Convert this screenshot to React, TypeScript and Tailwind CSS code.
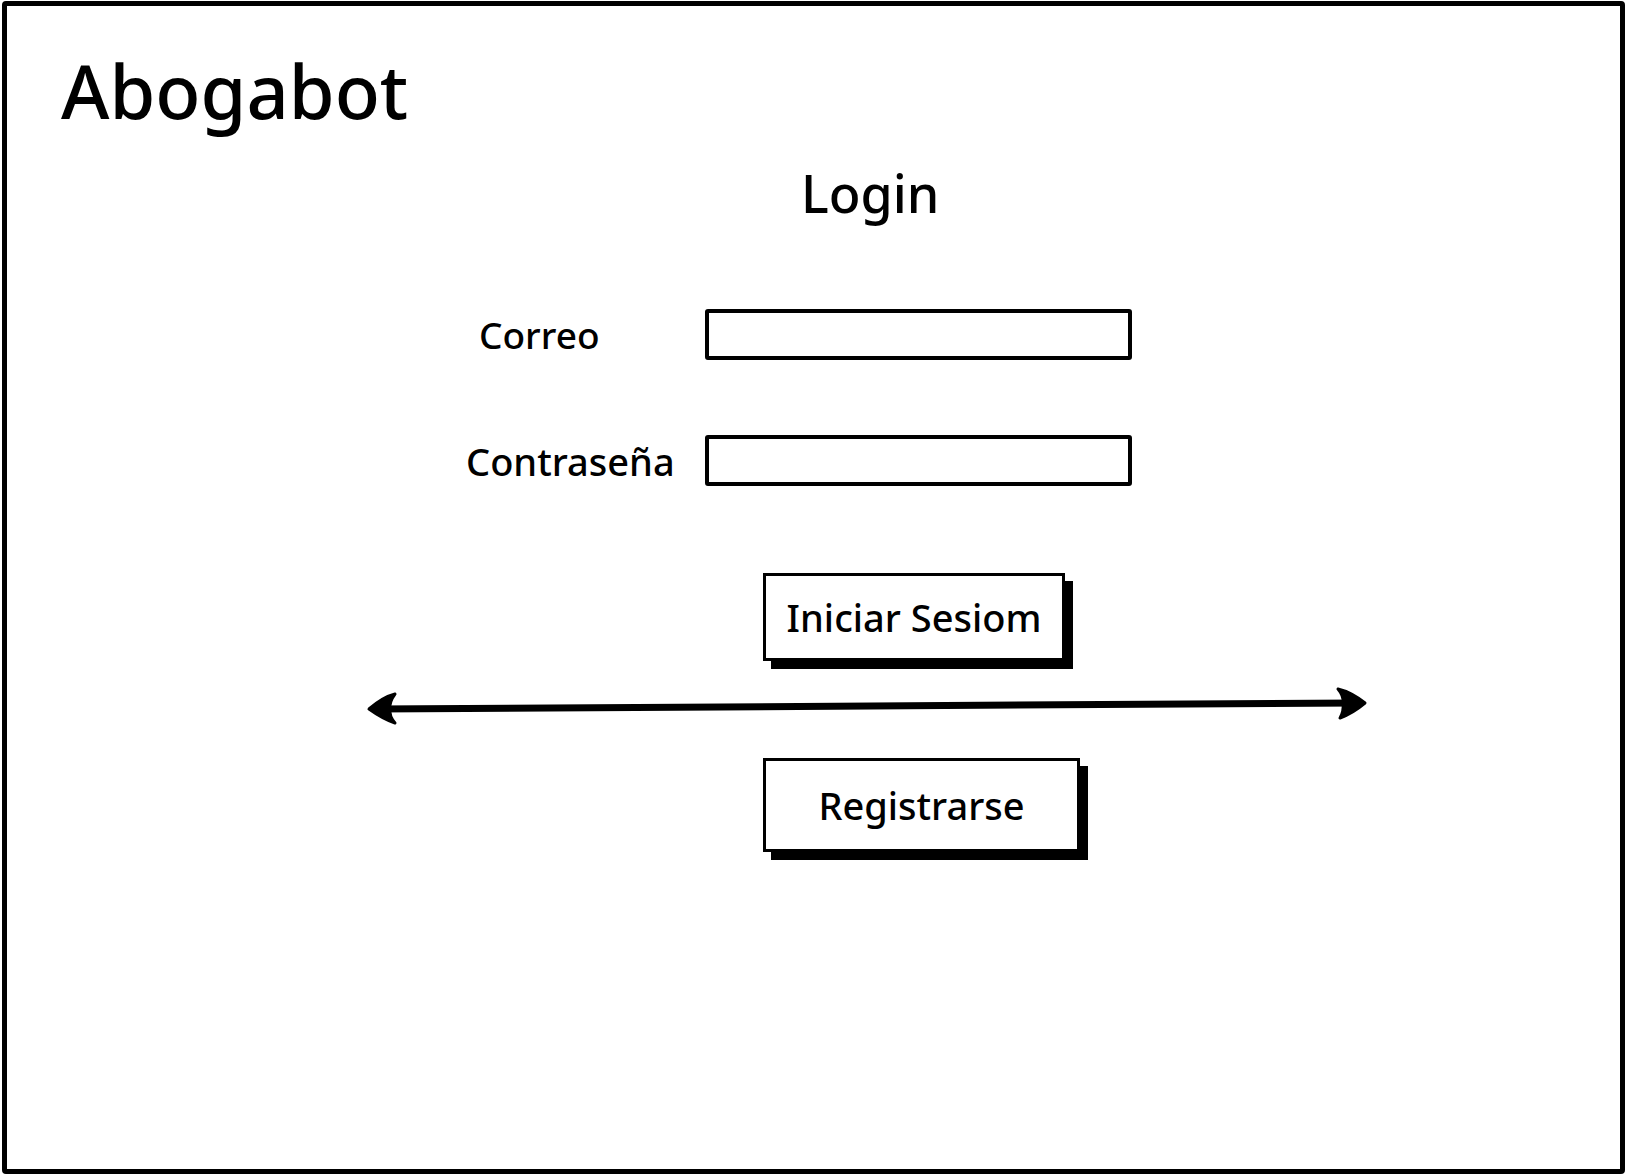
import React from 'react';

const font = { fontFamily: '"Noto Sans", "Open Sans", sans-serif' };

function SketchInput({ w, h, type }: { w: string; h: string; type?: string }) {
    return (
        <input
            type={type ?? 'text'}
            className={`${w} ${h} border-[4px] border-black rounded-[3px] bg-white outline-none px-3 text-2xl`}
        />
    );
}

function DoubleArrow() {
    return (
        <svg width="1030" height="40" viewBox="0 0 1030 40" className="block ml-[343px]">
            <path d="M26 23 L1008 17" stroke="#000" strokeWidth="7" strokeLinecap="round" fill="none" />
            {/* left head */}
            <path
                d="M19 23 Q33 11 45 8 Q39 16 40 23 Q39 30 45 37 Q33 33 19 23 Z"
                fill="#000"
                stroke="#000"
                strokeWidth="3"
                strokeLinejoin="round"
            />
            {/* right head */}
            <path
                d="M1015 17 Q1001 6 988 3 Q994 10 993 17 Q994 25 990 32 Q1003 27 1015 17 Z"
                fill="#000"
                stroke="#000"
                strokeWidth="3"
                strokeLinejoin="round"
            />
        </svg>
    );
}

export default function App() {
    return (
        <div className="h-[1176px] w-full bg-white pt-[1px] pl-[2px] pr-[1px] pb-[2px]" style={font}>
            <div className="h-full border-[5px] border-black rounded-[4px] flex flex-col text-black">
                {/* Header */}
                <h1 className="mt-[48px] ml-[54px] text-[74px] leading-none font-medium">Abogabot</h1>

                <h2 className="mt-[39px] ml-[794px] text-[52px] leading-none font-medium">Login</h2>

                {/* Form */}
                <div className="mt-[90px] flex items-center">
                    <label className="w-[698px] pl-[472px] text-[37px] leading-none font-medium">Correo</label>
                    <SketchInput w="w-[427px]" h="h-[51px]" type="email" />
                </div>

                <div className="mt-[75px] flex items-center">
                    <label className="w-[698px] pl-[459px] text-[38px] leading-none font-medium">Contraseña</label>
                    <SketchInput w="w-[427px]" h="h-[51px]" type="password" />
                </div>

                <button className="mt-[87px] ml-[756px] w-[302px] h-[88px] border-[3px] border-black bg-white shadow-[8px_8px_0_0_#000] text-[38px] font-medium leading-none">
                    Iniciar Sesiom
                </button>

                <div className="mt-[25px]">
                    <DoubleArrow />
                </div>

                <button className="mt-[32px] ml-[756px] w-[317px] h-[94px] border-[3px] border-black bg-white shadow-[8px_8px_0_0_#000] text-[38px] font-medium leading-none">
                    Registrarse
                </button>
            </div>
        </div>
    );
}
